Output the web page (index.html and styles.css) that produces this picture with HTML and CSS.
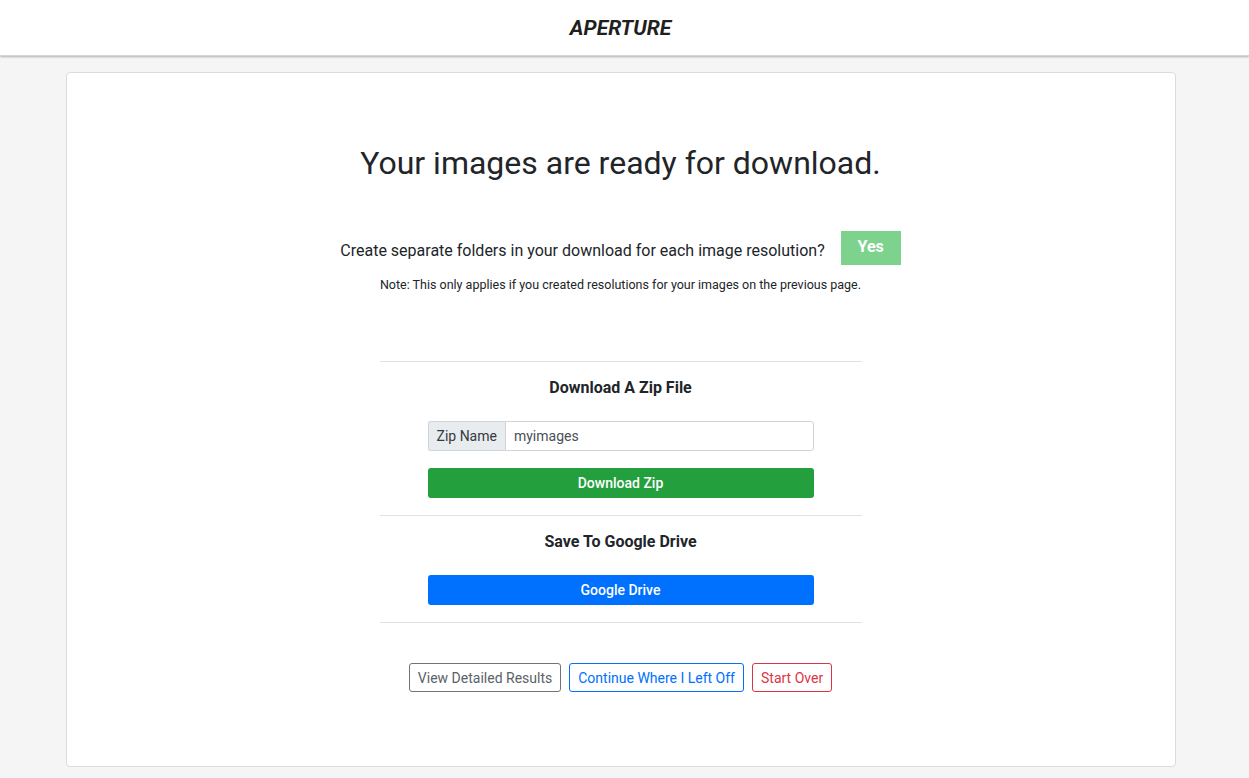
FILE: index.html
```html
<!DOCTYPE html>
<html>
<head>
<meta charset="utf-8">
<link rel="stylesheet" href="styles.css">
</head>
<body>
<header class="topbar">
  <div class="brand">APERTURE</div>
</header>
<main class="page">
  <div class="container">
    <div class="card">
      <h1 class="title">Your images are ready for download.</h1>
      <div class="question">
        <span class="question-text">Create separate folders in your download for each image resolution?</span>
        <button class="btn-yes">Yes</button>
      </div>
      <p class="note">Note: This only applies if you created resolutions for your images on the previous page.</p>

      <div class="options">
        <section class="option">
          <h2 class="option-title">Download A Zip File</h2>
          <div class="input-group">
            <span class="input-prefix">Zip Name</span>
            <input class="input-field" type="text" value="myimages">
          </div>
          <button class="btn-block btn-green">Download Zip</button>
        </section>
        <section class="option">
          <h2 class="option-title">Save To Google Drive</h2>
          <button class="btn-block btn-blue btn-drive">Google Drive</button>
        </section>
      </div>

      <div class="actions">
        <button class="btn-outline btn-gray">View Detailed Results</button>
        <button class="btn-outline btn-outline-blue">Continue Where I Left Off</button>
        <button class="btn-outline btn-red">Start Over</button>
      </div>
    </div>
  </div>
</main>
</body>
</html>
```

FILE: styles.css
```css
html, body {
  margin: 0;
  padding: 0;
}
body {
  background: #f5f5f5;
  font-family: Roboto, "Liberation Sans", sans-serif;
  color: #212529;
  min-height: 778px;
}
.topbar {
  background: #fff;
  height: 55px;
  display: flex;
  align-items: center;
  justify-content: center;
  padding-right: 8px;
  box-shadow: 0 1px 2px rgba(0, 0, 0, 0.28);
  border-bottom: 1px solid #d4d4d4;
}
.brand {
  font-weight: 700;
  font-style: italic;
  font-size: 21px;
  letter-spacing: 0;
  color: #1f1f1f;
  margin-top: 1px;
}
.page {
  padding-right: 8px;
}
.container {
  width: 1110px;
  margin: 16px auto 0;
}
.card {
  background: #fff;
  border: 1px solid #dcdcdc;
  border-radius: 4px;
  padding: 71px 0 74px;
  display: flex;
  flex-direction: column;
  align-items: center;
}
.title {
  margin: 0;
  font-size: 32px;
  font-weight: 400;
  line-height: 38px;
  color: #212529;
}
.question {
  margin-top: 49px;
  display: flex;
  align-items: center;
  gap: 16px;
  height: 34px;
}
.question-text {
  font-size: 16px;
  line-height: 24px;
  margin-top: 6px;
}
.btn-yes {
  width: 60px;
  height: 34px;
  border: none;
  background: #7dd38d;
  color: #fff;
  font-family: inherit;
  font-weight: 700;
  font-size: 16px;
  padding: 0 0 3px;
}
.note {
  margin: 11px 0 0;
  font-size: 12.5px;
  line-height: 18px;
}
.options {
  margin-top: 67px;
  width: 482px;
  border-bottom: 1px solid #e2e2e2;
}
.option {
  border-top: 1px solid #e2e2e2;
  display: flex;
  flex-direction: column;
  align-items: center;
  padding: 14px 0 17px;
}
.option-title {
  margin: 0;
  font-size: 16px;
  line-height: 24px;
  font-weight: 700;
}
.input-group {
  margin-top: 21px;
  width: 386px;
  height: 30px;
  display: flex;
  box-sizing: border-box;
}
.input-prefix {
  background: #e9ecef;
  border: 1px solid #ced4da;
  border-right: none;
  border-radius: 3px 0 0 3px;
  padding: 0 8px;
  font-size: 14px;
  display: flex;
  align-items: center;
  color: #343a40;
}
.input-field {
  flex: 1;
  border: 1px solid #ced4da;
  border-radius: 0 3px 3px 0;
  padding: 0 8px;
  font-family: inherit;
  font-size: 14px;
  color: #495057;
  outline: none;
  margin: 0;
}
.btn-block {
  width: 386px;
  height: 30px;
  border: none;
  border-radius: 3px;
  color: #fff;
  font-family: inherit;
  font-weight: 500;
  font-size: 14px;
  margin-top: 17px;
}
.btn-green {
  background: #249f3e;
}
.btn-blue {
  background: #0070ff;
}
.btn-drive {
  margin-top: 21px;
}
.actions {
  margin-top: 40px;
  display: flex;
  gap: 8px;
}
.btn-outline {
  background: #fff;
  height: 29px;
  padding: 0 8px;
  border-radius: 3px;
  font-family: inherit;
  font-size: 14px;
  border: 1px solid;
}
.btn-gray {
  color: #5a6268;
  border-color: #6c757d;
}
.btn-outline-blue {
  color: #0070ff;
  border-color: #0070ff;
}
.btn-red {
  color: #dc3545;
  border-color: #dc3545;
}
```
